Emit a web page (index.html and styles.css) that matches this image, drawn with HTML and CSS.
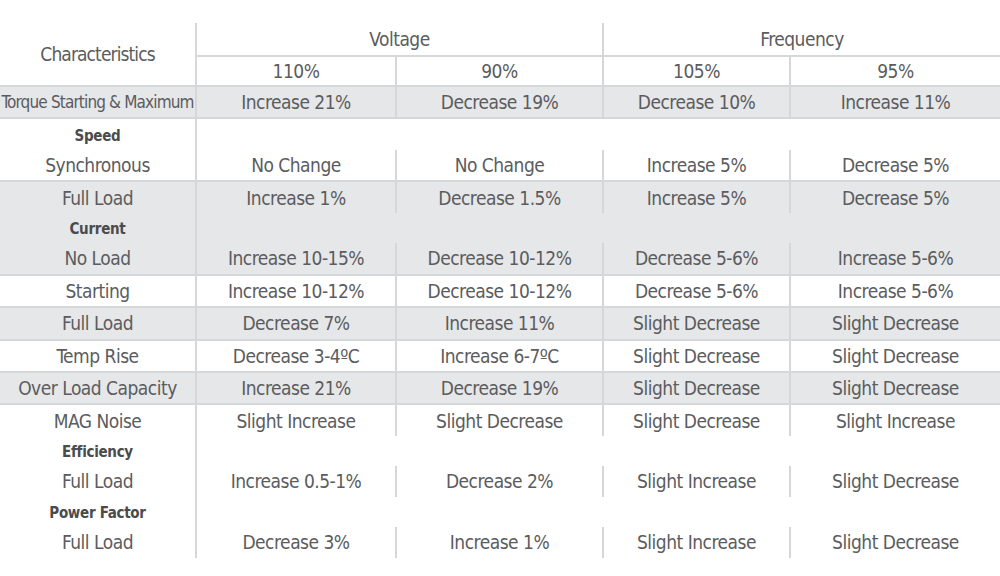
FILE: index.html
```html
<!DOCTYPE html>
<html lang="en">
<head>
<meta charset="utf-8">
<title>Effect of Voltage and Frequency Variation</title>
<link rel="stylesheet" href="styles.css">
</head>
<body>
<table class="spec">
  <colgroup>
    <col class="c0"><col class="c1"><col class="c2"><col class="c3"><col class="c4">
  </colgroup>
  <thead>
    <tr class="h1">
      <th rowspan="2" class="lab hchar">Characteristics</th>
      <th colspan="2" class="grp sep">Voltage</th>
      <th colspan="2" class="grp">Frequency</th>
    </tr>
    <tr class="h2">
      <th>110%</th><th class="bl">90%</th><th class="bl">105%</th><th class="bl">95%</th>
    </tr>
  </thead>
  <tbody>
    <tr class="g gt gb">
      <td class="lab tight">Torque Starting &amp; Maximum</td>
      <td>Increase 21%</td><td class="bl">Decrease 19%</td><td class="bl">Decrease 10%</td><td class="bl">Increase 11%</td>
    </tr>
    <tr class="sec">
      <td class="lab"><b>Speed</b></td><td></td><td></td><td></td><td></td>
    </tr>
    <tr>
      <td class="lab">Synchronous</td>
      <td>No Change</td><td class="bl">No Change</td><td class="bl">Increase 5%</td><td class="bl">Decrease 5%</td>
    </tr>
    <tr class="g gt">
      <td class="lab">Full Load</td>
      <td>Increase 1%</td><td class="bl">Decrease 1.5%</td><td class="bl">Increase 5%</td><td class="bl">Decrease 5%</td>
    </tr>
    <tr class="g sec">
      <td class="lab"><b>Current</b></td><td></td><td></td><td></td><td></td>
    </tr>
    <tr class="g gb">
      <td class="lab">No Load</td>
      <td class="low">Increase 10-15%</td><td class="bl low">Decrease 10-12%</td><td class="bl low">Decrease 5-6%</td><td class="bl low">Increase 5-6%</td>
    </tr>
    <tr>
      <td class="lab">Starting</td>
      <td>Increase 10-12%</td><td class="bl">Decrease 10-12%</td><td class="bl">Decrease 5-6%</td><td class="bl">Increase 5-6%</td>
    </tr>
    <tr class="g gt gb">
      <td class="lab">Full Load</td>
      <td>Decrease 7%</td><td class="bl">Increase 11%</td><td class="bl">Slight Decrease</td><td class="bl">Slight Decrease</td>
    </tr>
    <tr>
      <td class="lab">Temp Rise</td>
      <td>Decrease 3-4ºC</td><td class="bl">Increase 6-7ºC</td><td class="bl">Slight Decrease</td><td class="bl">Slight Decrease</td>
    </tr>
    <tr class="g gt gb">
      <td class="lab">Over Load Capacity</td>
      <td>Increase 21%</td><td class="bl">Decrease 19%</td><td class="bl">Slight Decrease</td><td class="bl">Slight Decrease</td>
    </tr>
    <tr>
      <td class="lab">MAG Noise</td>
      <td>Slight Increase</td><td class="bl">Slight Decrease</td><td class="bl">Slight Decrease</td><td class="bl">Slight Increase</td>
    </tr>
    <tr class="sec">
      <td class="lab"><b>Efficiency</b></td><td></td><td></td><td></td><td></td>
    </tr>
    <tr>
      <td class="lab">Full Load</td>
      <td class="low">Increase 0.5-1%</td><td class="bl low">Decrease 2%</td><td class="bl low">Slight Increase</td><td class="bl low">Slight Decrease</td>
    </tr>
    <tr class="sec">
      <td class="lab"><b>Power Factor</b></td><td></td><td></td><td></td><td></td>
    </tr>
    <tr>
      <td class="lab">Full Load</td>
      <td class="lower">Decrease 3%</td><td class="bl lower">Increase 1%</td><td class="bl lower">Slight Increase</td><td class="bl lower">Slight Decrease</td>
    </tr>
  </tbody>
</table>
</body>
</html>
```

FILE: styles.css
```css
html, body {
  margin: 0;
  padding: 0;
  background: #ffffff;
}

body {
  padding-top: 23px;
  font-family: "DejaVu Sans Condensed", "Liberation Sans Narrow", "Roboto Condensed", "Liberation Sans", sans-serif;
  color: #5b5c5e;
}

.spec {
  width: 1000px;
  border-collapse: collapse;
  table-layout: fixed;
  font-size: 19px;
  letter-spacing: -0.5px;
}

.c0 { width: 196px; }
.c1 { width: 200px; }
.c2 { width: 207px; }
.c3 { width: 187px; }
.c4 { width: 210px; }

.spec th,
.spec td {
  padding: 0;
  text-align: center;
  vertical-align: middle;
  font-weight: normal;
  white-space: nowrap;
  line-height: 20px;
}

.h1 th { height: 32px; }
.h2 th { height: 28px; }

.spec tbody td { height: 30.45px; }

.lab {
  border-right: 2px solid #d6d7d9;
}

.hchar {
  letter-spacing: -0.9px;
}

.grp {
  border-bottom: 2px solid #d6d7d9;
}

.sep {
  border-right: 2px solid #d6d7d9;
}

.bl {
  border-left: 2px solid #d6d7d9;
}

.sec td {
  border-left: none;
}

.sec .lab {
  border-right: 2px solid #d6d7d9;
}

.g td {
  background: #e6e7e9;
}

.gt td {
  border-top: 2px solid #d6d7d9;
}

.gb td {
  border-bottom: 2px solid #d6d7d9;
}

.sec b {
  font-weight: bold;
  font-size: 15px;
  letter-spacing: -0.3px;
  color: #4a4b4d;
}

.tight {
  font-size: 17px;
  letter-spacing: -0.85px;
}

.low {
  padding-top: 2px;
}

.lower {
  padding-top: 5px;
}
```
